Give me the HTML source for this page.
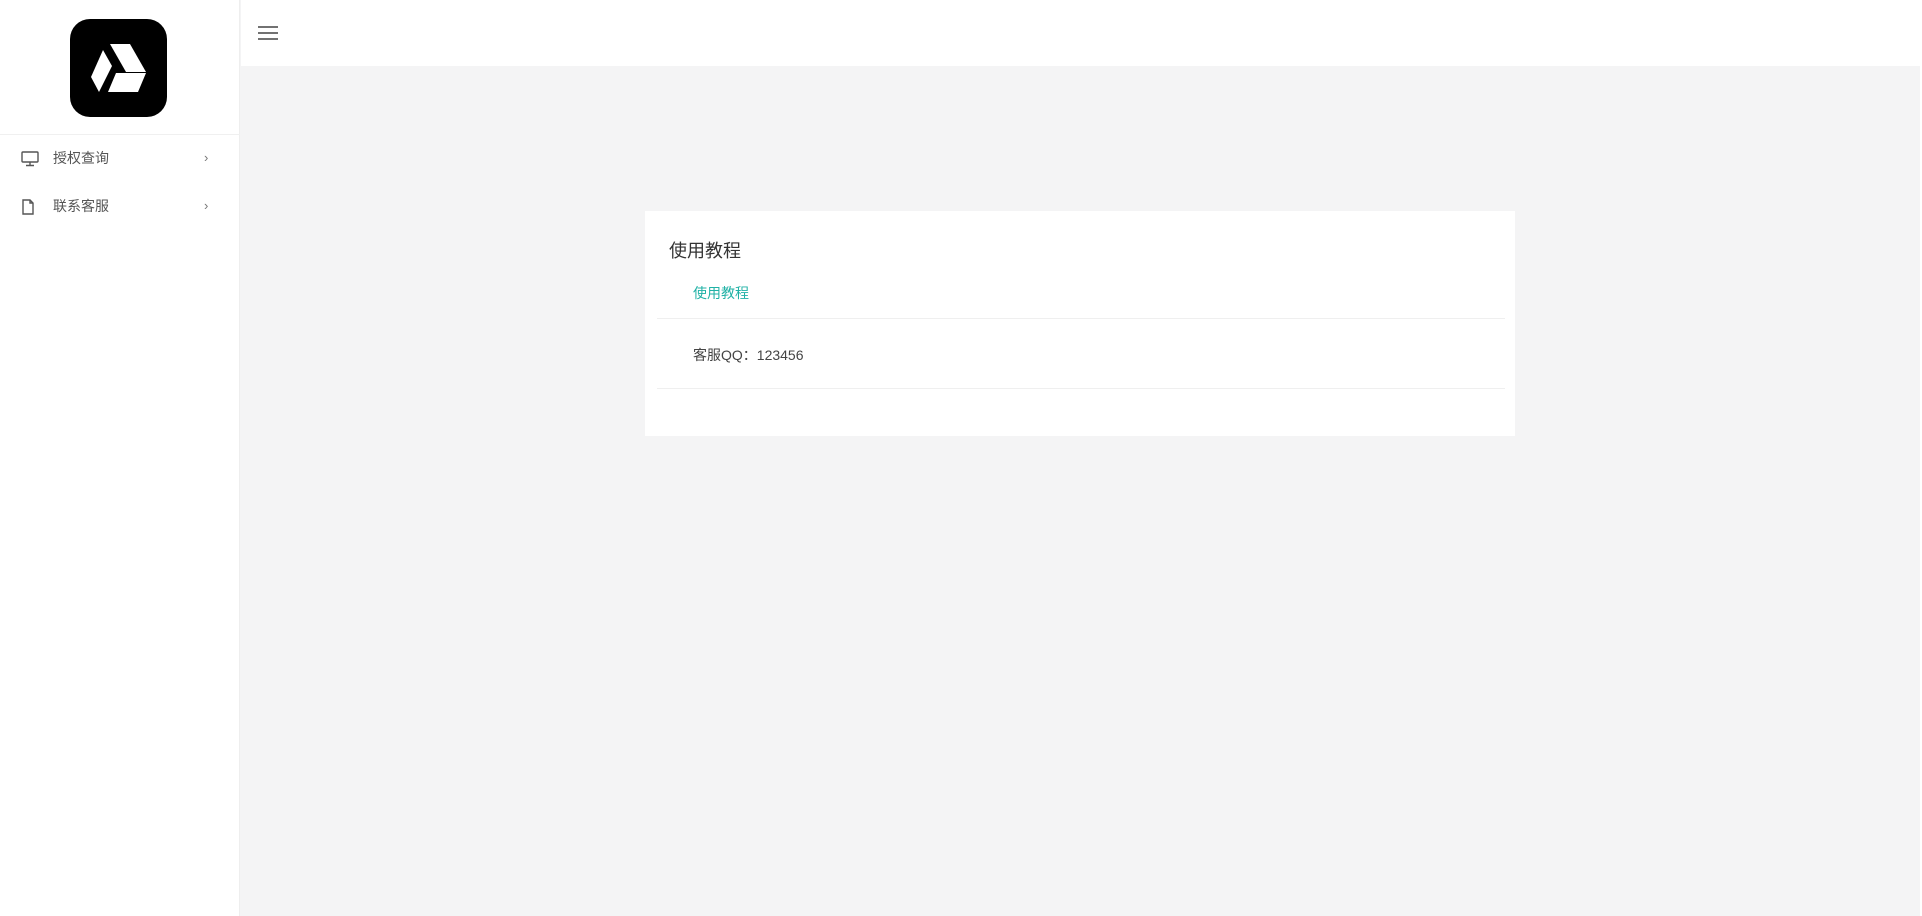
<!DOCTYPE html>
<html><head><meta charset="utf-8"><style>
*{margin:0;padding:0;box-sizing:border-box}
body{width:1922px;height:916px;overflow:hidden;background:#f4f4f5;font-family:"Liberation Sans","Noto Sans CJK SC",sans-serif;position:relative}
.side{position:absolute;left:0;top:0;width:240px;height:916px;background:#fff;border-right:1px solid #eee}
.logo{position:absolute;left:70px;top:19px;width:97px;height:98px;background:#000;border-radius:20px}
.sep{position:absolute;left:0;top:134px;width:240px;height:1px;background:#f0f0f0}
.mi{position:absolute;left:0;width:240px;height:40px;font-size:14px;color:#555;line-height:40px}
.mi span.t{position:absolute;left:53px}
.mi span.a{position:absolute;left:204px;font-size:13px;color:#777}
.mi svg{position:absolute;left:21px;top:13px}
.top{position:absolute;left:241px;top:0;width:1679px;height:66px;background:#fff}
.card{position:absolute;left:645px;top:211px;width:870px;height:225px;background:#fff}
.h{position:absolute;left:24px;top:26px;font-size:18px;color:#333}
.l{position:absolute;left:48px;top:72px;font-size:14px;color:#20b2a6}
.d{position:absolute;left:12px;width:848px;height:1px;background:#efefef}
.q{position:absolute;left:48px;top:134px;font-size:14px;color:#444}
</style></head><body>
<div class="side">
<div class="logo"><svg width="97" height="98" viewBox="0 0 97 98"><polygon points="40,25 60,25 76,53 56,53" fill="#fff"/><polygon points="33,31 42,47 29,73 21,58" fill="#fff"/><polygon points="46,54 76,54 68,73 38,73" fill="#fff"/></svg></div>
<div class="sep"></div>
<div class="mi" style="top:138px"><svg width="18" height="16" viewBox="0 0 18 16" fill="none" stroke="#555" stroke-width="1.4"><rect x="1" y="1" width="16" height="10" rx="1"/><path d="M9 11v3M5 14.5h8"/></svg><span class="t">授权查询</span><span class="a">›</span></div>
<div class="mi" style="top:186px"><svg width="14" height="16" viewBox="0 0 14 16" fill="none" stroke="#555" stroke-width="1.4"><path d="M2 1h7l3 3v11H2z"/><path d="M9 1v3h3"/></svg><span class="t">联系客服</span><span class="a">›</span></div>
</div>
<div class="top"><svg style="position:absolute;left:16px;top:25px" width="22" height="16"><path d="M1 2h20M1 8h20M1 14h20" stroke="#444" stroke-width="1.6"/></svg></div>
<div style="position:absolute;left:1920px;top:0;width:2px;height:916px;background:#fff"></div>
<div class="card">
<div class="h">使用教程</div>
<div class="l">使用教程</div>
<div class="d" style="top:107px"></div>
<div class="q">客服QQ：123456</div>
<div class="d" style="top:177px"></div>
</div>
</body></html>
